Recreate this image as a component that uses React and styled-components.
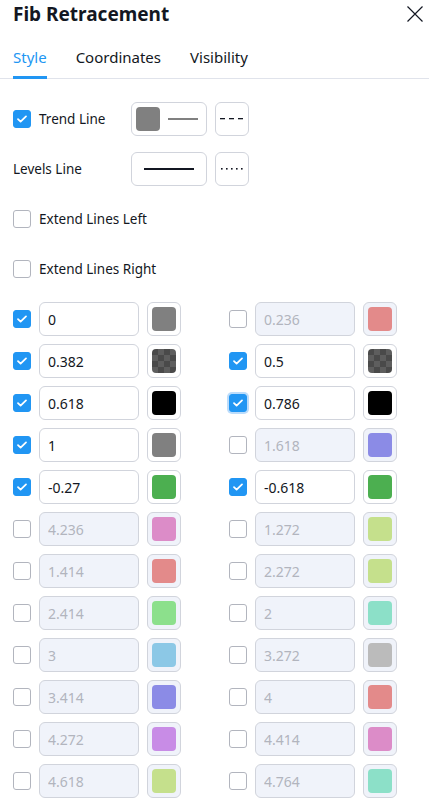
import React, { useState } from 'react';
import styled, { createGlobalStyle, css } from 'styled-components';

const GlobalStyle = createGlobalStyle`
  html, body {
    margin: 0;
    background: #ffffff;
  }
  body {
    font-family: "Noto Sans", "Open Sans", sans-serif;
    color: #131722;
  }
  * {
    box-sizing: border-box;
  }
`;

const Dialog = styled.div`
  width: 429px;
  background: #fff;
`;

const Header = styled.div`
  display: flex;
  align-items: center;
  justify-content: space-between;
  height: 28px;
  padding: 0 3px 0 13px;
`;

const Title = styled.h2`
  margin: 0;
  font-size: 19px;
  font-weight: 700;
  line-height: 28px;
  color: #131722;
`;

const CloseButton = styled.button`
  display: flex;
  align-items: center;
  justify-content: center;
  width: 22px;
  height: 22px;
  padding: 0;
  border: 0;
  background: none;
  color: #131722;
  cursor: pointer;
`;

const TabBar = styled.div`
  display: flex;
  gap: 29px;
  padding: 0 13px;
  border-bottom: 1px solid #e0e3eb;
`;

const Tab = styled.div`
  padding: 19px 0 9px;
  font-size: 15px;
  line-height: 20px;
  color: ${p => (p.$active ? '#2196f3' : '#131722')};
  border-bottom: 3px solid ${p => (p.$active ? '#2196f3' : 'transparent')};
  margin-bottom: -1px;
  cursor: pointer;
`;

const Body = styled.div`
  display: flex;
  flex-direction: column;
  gap: 16px;
  padding: 23px 13px 8px;
`;

const Row = styled.div`
  display: flex;
  align-items: center;
  height: 34px;
`;

const LabelCell = styled.div`
  display: flex;
  align-items: center;
  width: 118px;
`;

const Label = styled.span`
  font-size: 13.5px;
  color: #131722;
  white-space: nowrap;
`;

const Box = styled.span`
  display: flex;
  align-items: center;
  justify-content: center;
  flex: none;
  width: 18px;
  height: 18px;
  border-radius: 3px;
  border: 1px solid ${p => (p.$checked ? '#2196f3' : '#b2b5be')};
  background: ${p => (p.$checked ? '#2196f3' : '#fff')};
  ${p =>
    p.$focus &&
    css`
      box-shadow: 0 0 0 2px #bbdcfb;
    `}
`;

const CheckLabel = styled.label`
  display: flex;
  align-items: center;
  gap: 8px;
  cursor: pointer;
`;

const Controls = styled.div`
  display: flex;
  gap: 8px;
`;

const LineButton = styled.button`
  display: flex;
  align-items: center;
  gap: 8px;
  height: 34px;
  width: ${p => p.$width}px;
  padding: 0 4px;
  justify-content: ${p => (p.$center ? 'center' : 'flex-start')};
  border: 1px solid #d1d4dc;
  border-radius: 6px;
  background: #fff;
  cursor: pointer;
`;

const Swatch = styled.span`
  flex: none;
  width: 24px;
  height: 24px;
  border-radius: 4px;
  background: ${p => p.$color};
  ${p =>
    p.$checker &&
    css`
      background-color: #4a4a4a;
      background-image: linear-gradient(45deg, #5e5e5e 25%, transparent 25%),
        linear-gradient(-45deg, #5e5e5e 25%, transparent 25%),
        linear-gradient(45deg, transparent 75%, #5e5e5e 75%),
        linear-gradient(-45deg, transparent 75%, #5e5e5e 75%);
      background-size: 12px 12px;
      background-position: 0 0, 0 6px, 6px -6px, -6px 0;
    `}
`;

const Stroke = styled.span`
  display: block;
  width: ${p => p.$width}px;
  height: 2px;
  background: ${p => p.$color};
`;

const LevelGrid = styled.div`
  display: grid;
  grid-template-columns: 168px 168px;
  column-gap: 48px;
  row-gap: 8px;
`;

const Level = styled.div`
  display: flex;
  align-items: center;
  gap: 8px;
  height: 34px;
`;

const ValueInput = styled.input`
  width: 100px;
  height: 34px;
  padding: 0 8px;
  border: 1px solid #d1d4dc;
  border-radius: 6px;
  font-family: inherit;
  font-size: 14px;
  color: #131722;
  background: #fff;
  outline: none;
  &:disabled {
    background: #f0f3fa;
    color: #b2b5be;
  }
`;

const SwatchButton = styled.button`
  display: flex;
  align-items: center;
  justify-content: center;
  width: 34px;
  height: 34px;
  padding: 0;
  border: 1px solid #d1d4dc;
  border-radius: 6px;
  background: ${p => (p.$off ? '#f0f3fa' : '#fff')};
  cursor: pointer;
`;

const Check = ({ checked, focus }) => (
  <Box $checked={checked} $focus={focus}>
    {checked && (
      <svg width="12" height="10" viewBox="0 0 12 10" fill="none">
        <path d="M2 5.2l2.6 2.4L10 2.4" stroke="#fff" strokeWidth="1.8" strokeLinecap="round" strokeLinejoin="round" />
      </svg>
    )}
  </Box>
);

const Dashes = ({ dotted }) => (
  <svg width="24" height="4" viewBox="0 0 24 4">
    {dotted
      ? [1, 6, 11, 16, 21].map(x => <rect key={x} x={x} y="1" width="1.6" height="1.6" fill="#131722" />)
      : [0, 9, 18].map(x => <rect key={x} x={x} y="1" width="5" height="1.3" fill="#131722" />)}
  </svg>
);

const levels = [
  ['0', true, '#808080'],
  ['0.236', false, '#e38a8a'],
  ['0.382', true, 'checker'],
  ['0.5', true, 'checker'],
  ['0.618', true, '#000000'],
  ['0.786', true, '#000000', true],
  ['1', true, '#808080'],
  ['1.618', false, '#8b8be6'],
  ['-0.27', true, '#4caf50'],
  ['-0.618', true, '#4caf50'],
  ['4.236', false, '#dc8cc8'],
  ['1.272', false, '#c5e08c'],
  ['1.414', false, '#e38a8a'],
  ['2.272', false, '#c5e08c'],
  ['2.414', false, '#8ce08c'],
  ['2', false, '#8ce0c8'],
  ['3', false, '#8cc8e6'],
  ['3.272', false, '#bbbbbb'],
  ['3.414', false, '#8b8be6'],
  ['4', false, '#e38a8a'],
  ['4.272', false, '#c88ce6'],
  ['4.414', false, '#dc8cc8'],
  ['4.618', false, '#c5e08c'],
  ['4.764', false, '#8ce0c8'],
];

export default function App() {
  const [tab, setTab] = useState('Style');
  return (
    <Dialog>
      <GlobalStyle />
      <Header>
        <Title>Fib Retracement</Title>
        <CloseButton aria-label="Close">
          <svg width="18" height="18" viewBox="0 0 18 18">
            <path d="M1.5 1.5l15 15M16.5 1.5l-15 15" stroke="#131722" strokeWidth="1.2" />
          </svg>
        </CloseButton>
      </Header>
      <TabBar>
        {['Style', 'Coordinates', 'Visibility'].map(t => (
          <Tab key={t} $active={tab === t} onClick={() => setTab(t)}>
            {t}
          </Tab>
        ))}
      </TabBar>
      <Body>
        <Row>
          <LabelCell>
            <CheckLabel>
              <Check checked />
              <Label>Trend Line</Label>
            </CheckLabel>
          </LabelCell>
          <Controls>
            <LineButton $width={76}>
              <Swatch $color="#808080" />
              <Stroke $width={30} $color="#808080" />
            </LineButton>
            <LineButton $width={34} $center>
              <Dashes />
            </LineButton>
          </Controls>
        </Row>
        <Row>
          <LabelCell>
            <Label>Levels Line</Label>
          </LabelCell>
          <Controls>
            <LineButton $width={76} $center>
              <Stroke $width={50} $color="#131722" />
            </LineButton>
            <LineButton $width={34} $center>
              <Dashes dotted />
            </LineButton>
          </Controls>
        </Row>
        <Row>
          <CheckLabel>
            <Check />
            <Label>Extend Lines Left</Label>
          </CheckLabel>
        </Row>
        <Row>
          <CheckLabel>
            <Check />
            <Label>Extend Lines Right</Label>
          </CheckLabel>
        </Row>
        <LevelGrid>
          {levels.map(([value, on, color, focus]) => (
            <Level key={value}>
              <Check checked={on} focus={focus} />
              <ValueInput defaultValue={value} disabled={!on} />
              <SwatchButton $off={!on}>
                <Swatch $color={color} $checker={color === 'checker'} />
              </SwatchButton>
            </Level>
          ))}
        </LevelGrid>
      </Body>
    </Dialog>
  );
}
